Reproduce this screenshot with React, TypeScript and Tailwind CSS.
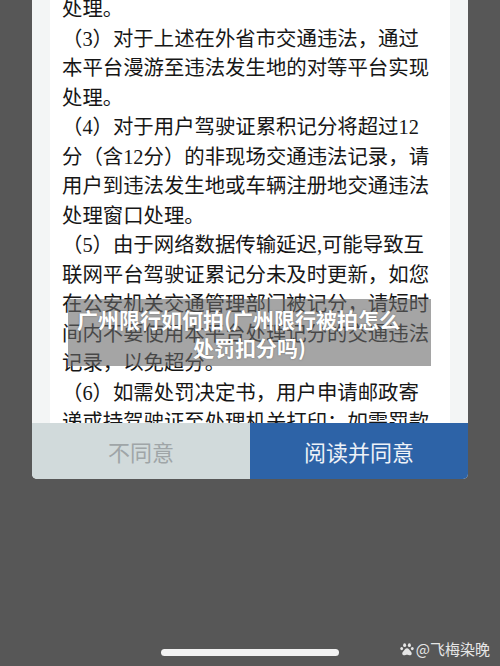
import React from "react";

const lines = [
  "处理。",
  "（3）对于上述在外省市交通违法，通过",
  "本平台漫游至违法发生地的对等平台实现",
  "处理。",
  "（4）对于用户驾驶证累积记分将超过12",
  "分（含12分）的非现场交通违法记录，请",
  "用户到违法发生地或车辆注册地交通违法",
  "处理窗口处理。",
  "（5）由于网络数据传输延迟,可能导致互",
  "联网平台驾驶证累记分未及时更新，如您",
  "在公安机关交通管理部门被记分，请短时",
  "间内不要使用本平台处理记分的交通违法",
  "记录，以免超分。",
  "（6）如需处罚决定书，用户申请邮政寄",
  "递或持驾驶证至处理机关打印；如需罚款",
];

function Paw() {
  return (
    <svg width="14" height="13" viewBox="0 0 14 13" fill="#e6e6e6">
      <ellipse cx="4.6" cy="2.2" rx="1.5" ry="1.9" />
      <ellipse cx="9.4" cy="2.2" rx="1.5" ry="1.9" />
      <ellipse cx="1.7" cy="5.6" rx="1.4" ry="1.7" />
      <ellipse cx="12.3" cy="5.6" rx="1.4" ry="1.7" />
      <path d="M7 5.2c-1.6 0-2.4 1.6-3.6 3-1 1.2-1.4 2-1 3 .5 1.2 2 1 3.2.7.6-.1.9-.1 1.4-.1s.8 0 1.4.1c1.2.3 2.7.5 3.2-.7.4-1-.1-1.8-1-3C9.4 6.8 8.6 5.2 7 5.2z" />
    </svg>
  );
}

export default function App() {
  return (
    <div className="w-[500px] h-[666px] bg-[#575757] relative overflow-hidden flex flex-col">
      <div className="mx-[32px] w-[436px] bg-[#f3f5f5] rounded-b-[5px] overflow-hidden">
        <div className="h-[423px] px-[18px]">
          <div className="h-full bg-white pl-[12px] overflow-hidden">
            <div
              className="mt-[-5px] text-[20.4px] leading-[29.5px] text-[#161616]"
              style={{ fontFamily: '"Liberation Serif", "Noto Sans CJK SC", serif' }}
            >
              {lines.map((l, i) => (
                <div key={i} className="whitespace-nowrap">
                  {l}
                </div>
              ))}
            </div>
          </div>
        </div>
        <div
          className="flex h-[56px] text-[22px]"
          style={{ fontFamily: '"Noto Sans CJK SC", sans-serif' }}
        >
          <div className="w-[218px] bg-[#d1dadb] flex items-center justify-center text-[#9fa5a7]">
            不同意
          </div>
          <div className="flex-1 bg-[#2d63a7] flex items-center justify-center text-[#eef2f8]">
            阅读并同意
          </div>
        </div>
      </div>

      <div className="mt-auto mb-[10px] flex justify-center">
        <div className="w-[178px] h-[7px] rounded-full bg-[#f2f2f2]" />
      </div>

      <div
        className="absolute left-[68px] top-[299px] w-[363px] h-[67px] bg-[rgba(105,105,105,0.6)] flex flex-col items-center justify-center text-white font-bold text-[21px] leading-[28px]"
        style={{
          fontFamily: '"Noto Sans CJK SC", sans-serif',
          textShadow: "0 0 2px rgba(0,0,0,0.35)",
        }}
      >
        <div className="whitespace-nowrap pr-[22px]">广州限行如何拍(广州限行被拍怎么</div>
        <div className="whitespace-nowrap">处罚扣分吗)</div>
      </div>

      <div
        className="absolute right-[10px] top-[638px] flex items-center gap-[2px] text-[15px] text-[#e6e6e6]"
        style={{ fontFamily: '"Noto Sans CJK SC", sans-serif' }}
      >
        <Paw />
        <span>@飞梅染晚</span>
      </div>
    </div>
  );
}
